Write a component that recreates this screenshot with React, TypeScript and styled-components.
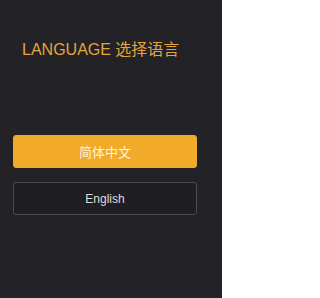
import React, { useState } from "react";
import styled, { createGlobalStyle } from "styled-components";

const GlobalStyle = createGlobalStyle`
  html, body {
    margin: 0;
    padding: 0;
    background: #ffffff;
  }
  body {
    font-family: "Liberation Sans", Arial, "Noto Sans CJK SC", sans-serif;
  }
`;

const Panel = styled.div`
  width: 222px;
  height: 298px;
  box-sizing: border-box;
  background: #232227;
  padding: 40px 0 0 13px;
  display: flex;
  flex-direction: column;
`;

const Title = styled.h1`
  margin: 0 0 0 9px;
  font-size: 16px;
  line-height: 20px;
  font-weight: normal;
  color: #e3a53c;
  font-family: "Liberation Sans", Arial, "Noto Sans CJK SC", sans-serif;
`;

const Options = styled.div`
  margin-top: 75px;
  display: flex;
  flex-direction: column;
  gap: 14px;
  width: 184px;
`;

const LangButton = styled.button<{ $active: boolean }>`
  height: 33px;
  box-sizing: border-box;
  border-radius: 3px;
  border: 1px solid ${(p) => (p.$active ? "#f2aa2a" : "#4c4b52")};
  background: ${(p) => (p.$active ? "#f2aa2a" : "#1f1e23")};
  color: ${(p) => (p.$active ? "#fff4de" : "#dcdcdc")};
  font-size: ${(p) => (p.$active ? "13px" : "12px")};
  font-family: "Liberation Sans", Arial, "Noto Sans CJK SC", sans-serif;
  display: flex;
  align-items: center;
  justify-content: center;
  padding: 0;
  cursor: pointer;
`;

const languages = [
  { id: "zh", label: "简体中文" },
  { id: "en", label: "English" },
];

function App() {
  const [lang, setLang] = useState<string>("zh");

  return (
    <>
      <GlobalStyle />
      <Panel>
        <Title>LANGUAGE 选择语言</Title>
        <Options>
          {languages.map((l) => (
            <LangButton
              key={l.id}
              $active={lang === l.id}
              onClick={() => setLang(l.id)}
            >
              {l.label}
            </LangButton>
          ))}
        </Options>
      </Panel>
    </>
  );
}

export default App;
